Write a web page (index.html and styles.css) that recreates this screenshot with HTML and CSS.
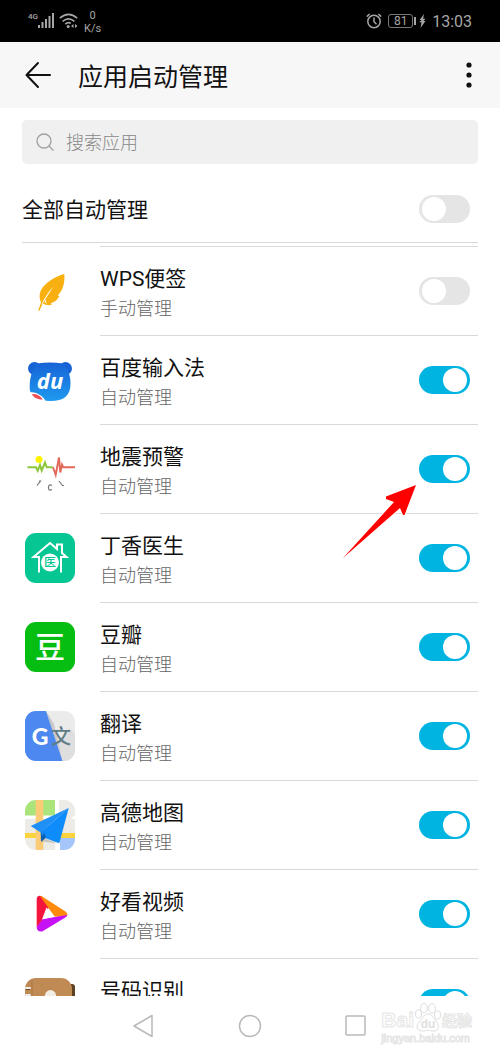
FILE: index.html
```html
<!DOCTYPE html>
<html lang="zh-CN">
<head>
    <meta charset="UTF-8">
    <meta name="viewport" content="width=device-width, initial-scale=1.0">
    <title>应用启动管理</title>
    <link rel="stylesheet" href="styles.css">
</head>
<body>

    <div class="status-bar">
        <div class="status-left">
            <span class="network">4G</span>
            <svg class="signal" width="17" height="16" viewBox="0 0 17 16" fill="#a6a6a6">
                <rect x="0" y="12" width="2" height="3"/>
                <rect x="3.5" y="9" width="2" height="6"/>
                <rect x="7" y="6" width="2" height="9"/>
                <rect x="10.5" y="3" width="2" height="12"/>
                <rect x="14" y="0" width="2" height="15"/>
            </svg>
            <svg width="19" height="16" viewBox="0 0 19 16" fill="none" stroke="#a6a6a6" stroke-width="1.6">
                <path d="M.8 5.2Q9.500-2.400 18.200 5.200M3.600 8.400Q9.500 3.200 15.400 8.400M6.300 11.200Q9 8.600 11.800 10.200"/>
                <circle cx="9.200" cy="13.500" r="1.500" fill="#a6a6a6" stroke="none"/>
                <path d="M14.500 11l-2.500 2 2.500 2zM16 11l2.500 2-2.500 2z" fill="#a6a6a6" stroke="none"/>
            </svg>
            <span class="speed">0<br>K/s</span>
        </div>
        <div class="status-right">
            <svg width="16" height="16" viewBox="0 0 16 16" fill="none" stroke="#a6a6a6" stroke-width="1.5">
                <circle cx="8" cy="8.500" r="6.200"/>
                <path d="M8 4.500v4.300l2.500 2.500M.8 3.600L3.600 1M15.200 3.600L12.400 1"/>
            </svg>
            <span class="battery">81</span>
            <svg width="7" height="14" viewBox="0 0 7 14" fill="#a6a6a6">
                <path d="M5 0L.6 6h2L.2 8.200h2.300L1.500 14l5-7h-2l2-2.200H4.200z"/>
            </svg>
            <span class="clock">13:03</span>
        </div>
    </div>

    <header class="header">
        <button class="icon-btn" aria-label="返回">
            <svg width="28" height="28" viewBox="0 0 28 28" fill="none" stroke="#111" stroke-width="2" stroke-linecap="round" stroke-linejoin="round">
                <path d="M26 14H3M14 2L2.500 14l11.500 12"/>
            </svg>
        </button>
        <h1>应用启动管理</h1>
        <button class="icon-btn" aria-label="更多">
            <svg width="6" height="26" viewBox="0 0 6 26" fill="#111">
                <circle cx="3" cy="3" r="2.600"/>
                <circle cx="3" cy="13" r="2.600"/>
                <circle cx="3" cy="23" r="2.600"/>
            </svg>
        </button>
    </header>

    <div class="search">
        <svg width="18" height="18" viewBox="0 0 18 18" fill="none" stroke="#a0a0a0" stroke-width="1.300">
            <circle cx="8" cy="8" r="7"/>
            <path d="M13 13l4.500 4.500"/>
        </svg>
        <input type="text" placeholder="搜索应用" aria-label="搜索应用">
    </div>

    <div class="all-row">
        <label for="all">全部自动管理</label>
        <input type="checkbox" class="switch" id="all">
    </div>

    <ul class="app-list">
        <li class="app scrolled"><div class="app-body"></div></li>

        <li class="app">
            <svg class="app-icon" viewBox="0 0 50 50">
                <path d="M39.300 8C30 10.500 20 16.500 15.800 24.500c-2 4.500-1.200 8.500.2 12L13 45l1.500-.4 3.300-7.300c3.500 2.400 6.500 2.200 9 1.500l-1-1.600c3.500-.6 7-3.700 8.500-7.200l-1.600-.6C38.500 24.500 40 15 39.300 8z" fill="#f8b011"/>
                <path d="M16.300 39C19 33 23 26 28 21c-3 5-6.500 10-10.300 16.500zM20.500 33.500l1.300 4.500-2.300-2.500z" fill="#fff"/>
            </svg>
            <div class="app-body">
                <label for="app1"><span class="name">WPS便签</span><span class="mode">手动管理</span></label>
                <input type="checkbox" class="switch" id="app1">
            </div>
        </li>

        <li class="app">
            <svg class="app-icon" viewBox="0 0 50 50">
                <defs>
                    <linearGradient id="bear" x1="0" y1="0" x2="0" y2="1">
                        <stop offset="0" stop-color="#1763d6"/>
                        <stop offset="1" stop-color="#1f9af0"/>
                    </linearGradient>
                </defs>
                <circle cx="9.500" cy="13.500" r="6.500" fill="#1763d6"/>
                <circle cx="40.500" cy="13.500" r="6.500" fill="#1763d6"/>
                <path d="M12 8.500q13-2 26 0c5 5 7.500 12 7.500 20 0 12-6 17.500-20.500 17.500-10 0-18-3-20-10C3.500 26 7 14 12 8.500z" fill="url(#bear)"/>
                <path d="M4 37c7 0 14 3 17 10-7 1-15-3-17-10z" fill="#fff"/>
                <path d="M7 39c5 0 9 2 10.500 5.500-4.500 0-9-1.500-10.500-5.500z" fill="#ef4d55"/>
                <text x="25" y="34" text-anchor="middle" class="glyph-du">du</text>
            </svg>
            <div class="app-body">
                <label for="app2"><span class="name">百度输入法</span><span class="mode">自动管理</span></label>
                <input type="checkbox" class="switch" id="app2" checked>
            </div>
        </li>

        <li class="app">
            <svg class="app-icon" viewBox="0 0 50 50" fill="none">
                <circle cx="14" cy="15.500" r="3.500" fill="#fff200"/>
                <path d="M2.500 23.300H11l1.700 3.500L15 21l1.700 5.500L20 18.500l1.700 4.800h6" stroke="#8cc63a" stroke-width="2"/>
                <path d="M28 23.300l2.700 7.500L34 13.500l1.300 15L37 20.500l1.300 2.800H50" stroke="#e2685a" stroke-width="1.900"/>
                <path d="M12 41.500l3.500-4.500h-1.500M34 37l3.500 4.500h1.500M27 41.500q-3.500-2-3.500 2t3.500 2" stroke="#777" stroke-width="1.200"/>
            </svg>
            <div class="app-body">
                <label for="app3"><span class="name">地震预警</span><span class="mode">自动管理</span></label>
                <input type="checkbox" class="switch" id="app3" checked>
            </div>
            <svg class="arrow" width="76" height="76" viewBox="0 0 76 76">
                <path d="M74 1L44 12.500v2.500l8 3L1 74l57-50 3 7h1.500z" fill="#f00" stroke="#fff" stroke-width="2" paint-order="stroke"/>
            </svg>
        </li>

        <li class="app">
            <svg class="app-icon" viewBox="0 0 50 50">
                <rect width="50" height="50" rx="11" fill="#06c693"/>
                <path d="M14 39.500V24H8.500L25 10l7 6v-4.500h5v8.500l4.500 4H36v15.500" fill="none" stroke="#fff" stroke-width="2"/>
                <circle cx="25" cy="29.500" r="9" fill="#fff"/>
                <text x="25" y="34" text-anchor="middle" class="glyph-yi">医</text>
            </svg>
            <div class="app-body">
                <label for="app4"><span class="name">丁香医生</span><span class="mode">自动管理</span></label>
                <input type="checkbox" class="switch" id="app4" checked>
            </div>
        </li>

        <li class="app">
            <svg class="app-icon" viewBox="0 0 50 50">
                <rect width="50" height="50" rx="11" fill="#06be12"/>
                <text x="25" y="36" text-anchor="middle" class="glyph-dou">豆</text>
            </svg>
            <div class="app-body">
                <label for="app5"><span class="name">豆瓣</span><span class="mode">自动管理</span></label>
                <input type="checkbox" class="switch" id="app5" checked>
            </div>
        </li>

        <li class="app">
            <svg class="app-icon" viewBox="0 0 50 50">
                <defs>
                    <clipPath id="tile"><rect width="50" height="50" rx="11"/></clipPath>
                </defs>
                <g clip-path="url(#tile)">
                    <rect width="50" height="50" fill="#ebebeb"/>
                    <path d="M44 17l6 6v27H38l-5-17z" fill="#dedede"/>
                    <path d="M21 0l8 13 8.500 37z" fill="#c8c8c8"/>
                    <path d="M0 0h21l16.500 50H0z" fill="#4c88ef"/>
                    <text x="15" y="34" text-anchor="middle" class="glyph-g">G</text>
                    <text x="36" y="33" text-anchor="middle" class="glyph-wen">文</text>
                </g>
            </svg>
            <div class="app-body">
                <label for="app6"><span class="name">翻译</span><span class="mode">自动管理</span></label>
                <input type="checkbox" class="switch" id="app6" checked>
            </div>
        </li>

        <li class="app">
            <svg class="app-icon" viewBox="0 0 50 50">
                <g clip-path="url(#tile)">
                    <rect width="50" height="50" fill="#fff"/>
                    <path d="M0 0h30v15.500H0z" fill="#aae57c"/>
                    <path d="M34 0h16v15L34 31zM0 19h30v14H0zM0 38h30v12H0zM34 19h16v14H34z" fill="#ecebe6"/>
                    <path d="M35 38h15v12H35z" fill="#a4c6fb"/>
                    <path d="M0 33h50v5H0z" fill="#fdd33c"/>
                    <path d="M10.700 0h7.600v50h-7.600z" fill="#fccb78"/>
                    <path d="M16 41.500l18 2-14-5z" fill="#000" opacity=".15"/>
                </g>
                <path d="M43.700 8L5.700 26l10 6.500z" fill="#1f90f8"/>
                <path d="M15.700 32.500l8-6.500-3 11.500-4.700 4.200z" fill="#0a5fb0"/>
                <path d="M43.700 8L15.700 32.500l3 5 15.600 5.700z" fill="#0f8cfb"/>
                <path d="M19 32.500l-3 9.200 5-4.200z" fill="#0a5fb0"/>
            </svg>
            <div class="app-body">
                <label for="app7"><span class="name">高德地图</span><span class="mode">自动管理</span></label>
                <input type="checkbox" class="switch" id="app7" checked>
            </div>
        </li>

        <li class="app">
            <svg class="app-icon" viewBox="0 0 50 50">
                <path d="M11.700 38V10c0-3 3-4 5.500-2.500L24 18l-6.500 14z" fill="#f5143c"/>
                <path d="M15 7c1 0 2 .3 3 1l22.500 14.500c2.500 2 2.500 4 .5 5.500l-11.500-.5z" fill="#ff8a0c"/>
                <path d="M42.300 26c-.3 1-.8 1.600-2 2.500L18 42c-3 1.500-6.300 0-6.300-4l6-8z" fill="#c711f5"/>
                <path d="M21.500 18.500l8 9-12.500 3z" fill="#fff"/>
            </svg>
            <div class="app-body">
                <label for="app8"><span class="name">好看视频</span><span class="mode">自动管理</span></label>
                <input type="checkbox" class="switch" id="app8" checked>
            </div>
        </li>

        <li class="app">
            <svg class="app-icon" viewBox="0 0 50 50">
                <rect x="40" y="6" width="10" height="40" rx="3" fill="#5e4023"/>
                <rect width="47" height="50" rx="11" fill="#c08a55"/>
                <path d="M7 2v46" stroke="#a87443"/>
                <path d="M1 10h4M1 17h4" stroke="#eee" stroke-width="2" stroke-linecap="round"/>
                <path d="M1 11.500h4M1 18.500h4" stroke="#6b4a2a"/>
                <ellipse cx="25.500" cy="20" rx="6" ry="8" fill="#f3ede4"/>
            </svg>
            <div class="app-body">
                <label for="app9"><span class="name">号码识别</span></label>
                <input type="checkbox" class="switch" id="app9" checked>
            </div>
        </li>
    </ul>

    <nav class="nav-bar">
        <button class="icon-btn" aria-label="返回键">
            <svg width="24" height="24" viewBox="0 0 24 24" fill="none" stroke="#b9b9b9" stroke-width="1.500" stroke-linejoin="round">
                <path d="M20 1.500v21L2 12z"/>
            </svg>
        </button>
        <button class="icon-btn" aria-label="主屏幕">
            <svg width="24" height="24" viewBox="0 0 24 24" fill="none" stroke="#b9b9b9" stroke-width="1.500">
                <circle cx="12" cy="12" r="10.500"/>
            </svg>
        </button>
        <button class="icon-btn" aria-label="最近任务">
            <svg width="24" height="24" viewBox="0 0 24 24" fill="none" stroke="#b9b9b9" stroke-width="1.500">
                <rect x="2" y="2" width="19" height="19" rx="1"/>
            </svg>
        </button>
    </nav>

    <div class="watermark">
        <div class="brand">
            <span class="brand-bai">Bai</span>
            <svg width="28" height="30" viewBox="0 0 28 30" fill="#fff" stroke="#dedede">
                <ellipse cx="4.500" cy="12" rx="3" ry="4.200"/>
                <ellipse cx="10" cy="6" rx="3.300" ry="4.700"/>
                <ellipse cx="18" cy="6.500" rx="3.300" ry="4.700"/>
                <ellipse cx="23.500" cy="13" rx="3" ry="4.200"/>
                <path d="M14 12c4 0 5 4 8 7s4 10-2 10c-3 0-4-.6-6-.6s-3 .6-6 .6c-6 0-6-6-2-10 3-3 4-7 8-7z"/>
                <text x="14" y="26" text-anchor="middle" class="paw-du">du</text>
            </svg>
            <span class="brand-jy">经验</span>
        </div>
        <div class="site">jingyan.baidu.com</div>
    </div>

</body>
</html>
```
FILE: styles.css
```css
* {
    box-sizing: border-box;
}

body {
    margin: 0;
    height: 100vh;
    display: flex;
    flex-direction: column;
    position: relative;
    overflow: hidden;
    background-color: #fff;
    color: #111;
    font-family: Roboto, "Noto Sans CJK SC", sans-serif;
}

.status-bar {
    flex: none;
    height: 42px;
    padding: 0 28px;
    display: flex;
    justify-content: space-between;
    align-items: center;
    background-color: #000;
    color: #a6a6a6;
}

.status-left, .status-right {
    display: flex;
    align-items: center;
}

.status-left {
    gap: 4px;
}

.status-right {
    gap: 6px;
}

.network {
    width: 10px;
    font-size: 8px;
    font-weight: 500;
    line-height: 8px;
    padding-bottom: 8px;
}

.signal {
    margin-left: -4px;
}

.speed {
    margin-left: 2px;
    padding-top: 1px;
    font-size: 11px;
    line-height: 13px;
    text-align: center;
}

.battery {
    position: relative;
    width: 25px;
    border: 1px solid #777;
    border-radius: 3px;
    font-size: 12px;
    line-height: 12px;
    text-align: center;
}

.battery::after {
    content: "";
    position: absolute;
    top: 2px;
    right: -4px;
    width: 2px;
    height: 8px;
    background-color: #a6a6a6;
}

.clock {
    padding-top: 2px;
    font-size: 16px;
    line-height: 20px;
}

.header {
    flex: none;
    height: 66px;
    padding: 0 28px 0 24px;
    display: flex;
    align-items: center;
    background-color: #f7f7f7;
}

.header h1 {
    flex: 1;
    margin: 0 0 0 26px;
    padding-top: 6px;
    font-size: 25px;
    line-height: 36px;
    font-weight: 400;
}

.icon-btn {
    display: flex;
    padding: 0;
    border: none;
    background: none;
    cursor: pointer;
}

.search {
    flex: none;
    height: 44px;
    margin: 12px 22px 0;
    padding: 0 14px;
    display: flex;
    align-items: center;
    gap: 12px;
    background-color: #f0f0f0;
    border-radius: 5px;
}

.search input {
    flex: 1;
    min-width: 0;
    padding: 0;
    border: none;
    outline: none;
    background: none;
    font-family: inherit;
    font-size: 18px;
    font-weight: 300;
}

.search input::placeholder {
    color: #888;
}

.all-row {
    flex: none;
    height: 79px;
    margin: 0 22px;
    padding: 11px 8px 0 0;
    display: flex;
    align-items: center;
    justify-content: space-between;
    border-bottom: 1px solid #d9d9d9;
    font-size: 21px;
    line-height: 30px;
}

.all-row label {
    padding-top: 3px;
}

.switch {
    appearance: none;
    flex: none;
    width: 51px;
    height: 28px;
    margin: 0;
    padding: 0 3px;
    display: flex;
    align-items: center;
    border-radius: 14px;
    background-color: #e5e5e5;
    cursor: pointer;
}

.switch::before {
    content: "";
    width: 24px;
    height: 24px;
    border-radius: 50%;
    background-color: #fff;
}

.switch:checked {
    justify-content: flex-end;
    background-color: #00b4e1;
}

.app-list {
    flex: 1;
    min-height: 0;
    margin: 0;
    padding: 0;
    overflow: hidden;
    list-style: none;
}

.app {
    position: relative;
    height: 89px;
    margin: 0 22px 0 25px;
    display: flex;
    gap: 25px;
}

.app.scrolled {
    height: 4px;
    padding-left: 75px;
}

.app-icon {
    flex: none;
    width: 50px;
    height: 50px;
    margin-top: 19px;
}

.app-body {
    flex: 1;
    padding-right: 8px;
    display: flex;
    align-items: center;
    justify-content: space-between;
    border-bottom: 1px solid #d9d9d9;
}

.app-body label {
    min-height: 66px;
    padding-top: 6px;
}

.name, .mode {
    display: block;
    line-height: 30px;
}

.name {
    font-size: 21px;
}

.mode {
    font-size: 18px;
    font-weight: 300;
    color: #666;
}

/* red pointer over the switch */
.arrow {
    position: absolute;
    top: 59px;
    right: 60px;
    z-index: 1;
}

.glyph-du {
    font: italic 700 22px "Open Sans", sans-serif;
    fill: #fff;
}

.glyph-yi {
    font: 500 12px "Noto Sans CJK SC", sans-serif;
    fill: #06c693;
}

.glyph-dou {
    font: 500 30px "Noto Sans CJK SC", sans-serif;
    fill: #fff;
}

.glyph-g {
    font: 900 23px Lato, sans-serif;
    fill: #fff;
}

.glyph-wen {
    font: 500 20px "Noto Sans CJK SC", sans-serif;
    fill: #607d86;
}

.nav-bar {
    flex: none;
    height: 60px;
    display: flex;
    justify-content: center;
    align-items: center;
    gap: 82px;
}

.watermark {
    position: absolute;
    right: 28px;
    bottom: 11px;
    color: #fff;
    -webkit-text-stroke: 1px #e6e6e6;
}

.brand {
    display: flex;
    align-items: flex-end;
}

.brand-bai {
    font: 700 21px/24px "Liberation Sans", sans-serif;
}

.brand-jy {
    font: 700 15px/24px "Noto Sans CJK SC", sans-serif;
}

.paw-du {
    font: 700 12px "Liberation Sans", sans-serif;
    -webkit-text-stroke: 0;
    fill: #e0e0e0;
    stroke: none;
}

.site {
    font: 400 11px/13px "Liberation Sans", sans-serif;
}
```
